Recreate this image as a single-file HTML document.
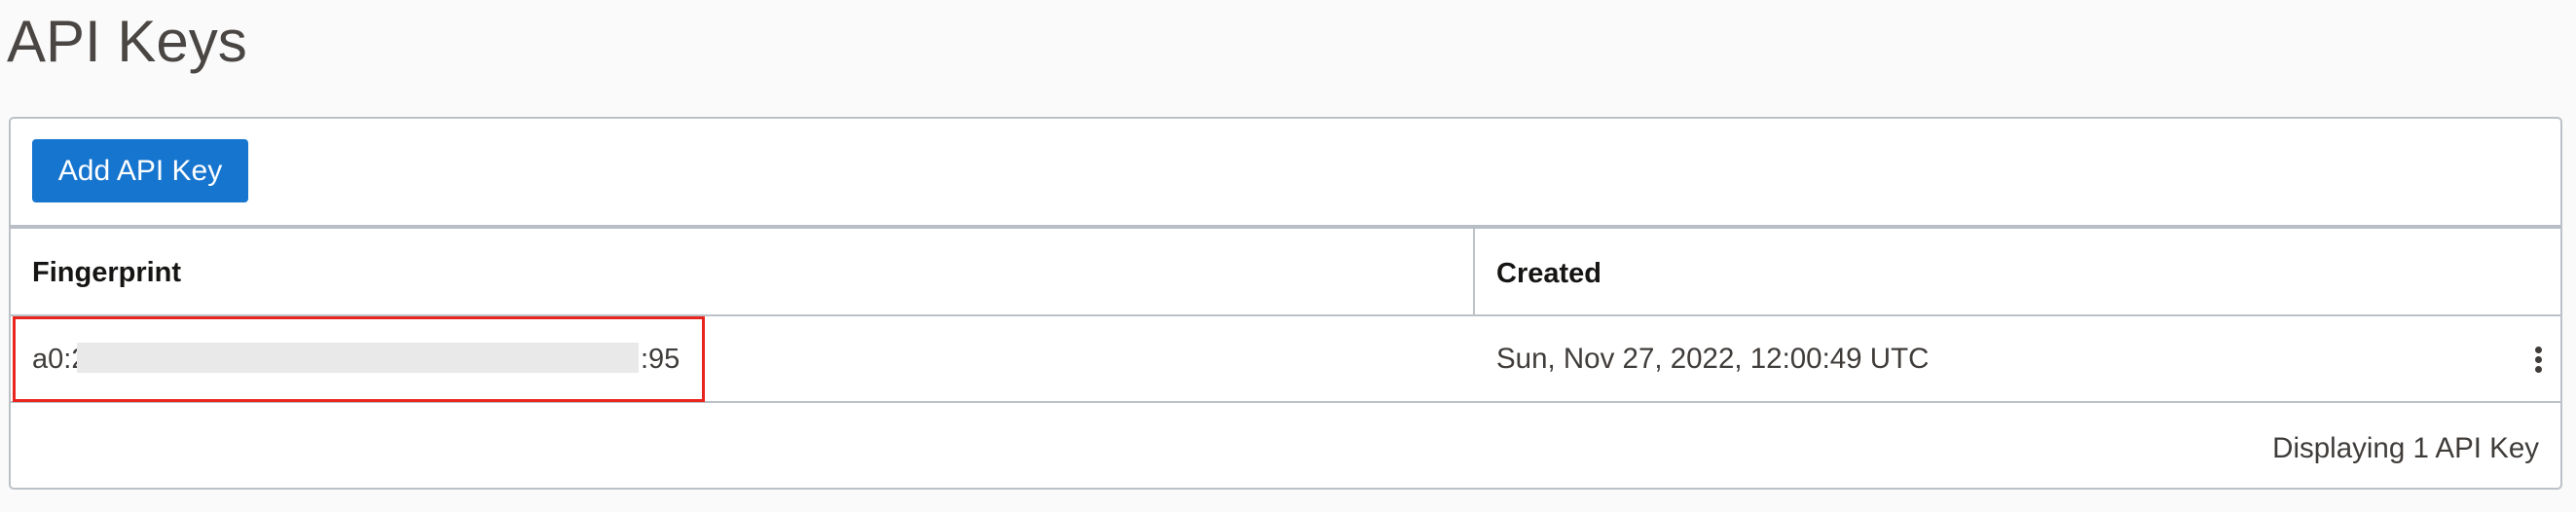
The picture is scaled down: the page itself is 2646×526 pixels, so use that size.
<!DOCTYPE html>
<html><head><meta charset="utf-8"><style>
*{margin:0;padding:0;box-sizing:border-box}
body{width:2646px;height:526px;background:#fafafa;font-family:"Liberation Sans",Arial,sans-serif;position:relative;overflow:hidden}
.a{position:absolute;white-space:nowrap}
</style></head><body>
<div class="a" style="left:7px;top:8px;font-size:60px;line-height:70px;color:#4a4644">API Keys</div>
<div class="a" style="left:9px;top:120px;width:2623px;height:383px;background:#fff;border:2px solid #bcc1c8;border-radius:5px"></div>
<div class="a" style="left:33px;top:143px;width:222px;height:65px;background:#1675cf;border-radius:4px;color:#fff;font-size:30px;line-height:65px;text-align:center">Add API Key</div>
<div class="a" style="left:10px;top:231px;width:2621px;height:4px;background:#b8bec6"></div>
<div class="a" style="left:1513px;top:235px;width:2px;height:89px;background:#bcc1c8"></div>
<div class="a" style="left:10px;top:323px;width:2621px;height:2px;background:#bcc1c8"></div>
<div class="a" style="left:10px;top:412px;width:2621px;height:2px;background:#bcc1c8"></div>
<div class="a" style="left:33px;top:263px;font-size:29px;line-height:34px;font-weight:bold;color:#161513">Fingerprint</div>
<div class="a" style="left:1537px;top:264px;font-size:29px;line-height:34px;font-weight:bold;color:#161513">Created</div>
<div class="a" style="left:33px;top:352px;font-size:29px;line-height:34px;color:#3f3c3a">a0:2</div>
<div class="a" style="left:79px;top:352px;width:577px;height:31px;background:#e9e9e9"></div>
<div class="a" style="left:658px;top:352px;font-size:29px;line-height:34px;color:#3f3c3a">:95</div>
<div class="a" style="left:13px;top:325px;width:711px;height:88px;border:3px solid #e8261f"></div>
<div class="a" style="left:1537px;top:352px;font-size:29.5px;line-height:34px;color:#3f3c3a">Sun, Nov 27, 2022, 12:00:49 UTC</div>
<div class="a" style="left:2604px;top:356px;width:7px;height:7px;border-radius:50%;background:#3f3c3a"></div>
<div class="a" style="left:2604px;top:366px;width:7px;height:7px;border-radius:50%;background:#3f3c3a"></div>
<div class="a" style="left:2604px;top:376px;width:7px;height:7px;border-radius:50%;background:#3f3c3a"></div>
<div class="a" style="right:38px;top:444px;font-size:29.5px;line-height:34px;color:#3f3c3a">Displaying 1 API Key</div>
</body></html>
